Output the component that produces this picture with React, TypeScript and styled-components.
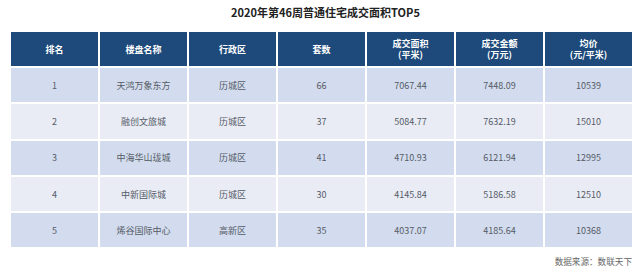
import React from 'react';
import styled, { createGlobalStyle } from 'styled-components';

const GlobalStyle = createGlobalStyle`
  body {
    margin: 0;
    background: #ffffff;
    font-family: 'Noto Sans CJK SC', 'Noto Sans', sans-serif;
  }
`;

const Page = styled.div`
  width: 640px;
  height: 273px;
  box-sizing: border-box;
  padding: 0 8px 0 11px;
  display: flex;
  flex-direction: column;
`;

const Title = styled.h1`
  margin: 0;
  height: 24px;
  line-height: 24px;
  padding-left: 8px;
  text-align: center;
  font-size: 11px;
  font-weight: 700;
  color: #222;
`;

const Table = styled.div`
  margin-top: 8px;
  width: 621px;
  display: grid;
  grid-template-columns: repeat(7, 1fr);
  grid-template-rows: 34px repeat(5, 34.3px);
  gap: 2px;
`;

const HeadCell = styled.div`
  background: #1d4a7a;
  color: #ffffff;
  font-size: 9px;
  font-weight: 700;
  line-height: 11px;
  display: flex;
  align-items: center;
  justify-content: center;
  text-align: center;
  white-space: pre-line;
`;

const Cell = styled.div<{ odd: boolean }>`
  background: ${(props) => (props.odd ? '#d2dcee' : '#e9ecf5')};
  color: #555b66;
  font-size: 9px;
  display: flex;
  align-items: center;
  justify-content: center;
`;

const Footer = styled.div`
  margin-top: 8px;
  text-align: right;
  font-size: 8.6px;
  color: #666;
`;

const headers = [
  '排名',
  '楼盘名称',
  '行政区',
  '套数',
  '成交面积\n(平米)',
  '成交金额\n(万元)',
  '均价\n(元/平米)',
];

const rows = [
  ['1', '天鸿万象东方', '历城区', '66', '7067.44', '7448.09', '10539'],
  ['2', '融创文旅城', '历城区', '37', '5084.77', '7632.19', '15010'],
  ['3', '中海华山珑城', '历城区', '41', '4710.93', '6121.94', '12995'],
  ['4', '中新国际城', '历城区', '30', '4145.84', '5186.58', '12510'],
  ['5', '烯谷国际中心', '高新区', '35', '4037.07', '4185.64', '10368'],
];

export default function App() {
  return (
    <>
      <GlobalStyle />
      <Page>
        <Title>2020年第46周普通住宅成交面积TOP5</Title>
        <Table>
          {headers.map((h) => (
            <HeadCell key={h}>{h}</HeadCell>
          ))}
          {rows.map((row, i) =>
            row.map((value, j) => (
              <Cell key={`${i}-${j}`} odd={i % 2 === 0}>
                {value}
              </Cell>
            ))
          )}
        </Table>
        <Footer>数据来源：数联天下</Footer>
      </Page>
    </>
  );
}
